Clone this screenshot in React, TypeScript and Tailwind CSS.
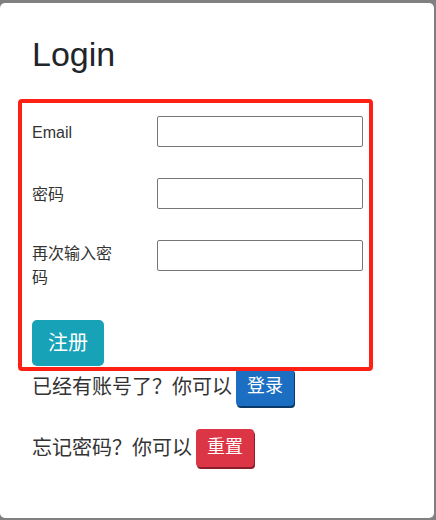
const font = { fontFamily: '"Liberation Sans", "Noto Sans CJK SC", sans-serif' };

type Field = { id: string; label: string; type: string; labelClass: string };

// the two-line label sits a little higher than the single-line ones
const fields: Field[] = [
  { id: "email", label: "Email", type: "email", labelClass: "pt-[5px] -mb-[4px]" },
  { id: "password", label: "密码", type: "password", labelClass: "pt-[5px] -mb-[4px]" },
  { id: "confirm", label: "再次输入密码", type: "password", labelClass: "pt-[2px] -mb-[1px]" },
];

export default function App() {
  return (
    <div className="h-[520px] w-[436px] overflow-hidden bg-[#808080]" style={font}>
      <div className="mt-[3px] h-[515px] w-[434px] rounded-[5px] bg-white px-[18px] text-[#212529]">
        <h1 className="pl-[14px] pt-[31px] text-[34px] font-normal leading-[1.2]">Login</h1>

        {/* form, outlined in red */}
        <form className="relative z-10 mt-[24px] w-[355px] rounded-[4px] border-[4px] border-[#fe2015] pb-[1px] pl-[10px] pr-[6px] pt-[13px]">
          {fields.map((field) => (
            <div key={field.id} className="mb-[31px] flex items-start">
              <label
                htmlFor={field.id}
                className={`w-[92px] shrink-0 text-[16px] leading-[24px] text-[#333] ${field.labelClass}`}
              >
                {field.label}
              </label>
              <input
                id={field.id}
                type={field.type}
                className="ml-[33px] h-[31px] w-[206px] rounded-[2px] border border-[#767676] bg-white px-1 outline-none"
              />
            </div>
          ))}
          <button
            type="button"
            className="h-[46px] w-[72px] rounded-[5px] bg-[#17a2b8] text-[20px] leading-[30px] text-white"
          >
            注册
          </button>
        </form>

        <div className="-mt-[4px] flex h-[40px] items-center pl-[14px] text-[20px] text-[#333]">
          <span>已经有账号了？你可以</span>
          <button
            type="button"
            className="ml-[4px] h-[38px] w-[58px] rounded-[4px] bg-[#1b6ec2] text-[18px] text-white shadow-[1px_2px_0_#0c3a66]"
          >
            登录
          </button>
        </div>
        <div className="mt-[21px] flex h-[40px] items-center pl-[14px] text-[20px] text-[#333]">
          <span>忘记密码？你可以</span>
          <button
            type="button"
            className="ml-[4px] h-[38px] w-[58px] rounded-[4px] bg-[#dc3545] text-[18px] text-white shadow-[1px_2px_0_#8a1f2b]"
          >
            重置
          </button>
        </div>
      </div>
    </div>
  );
}
